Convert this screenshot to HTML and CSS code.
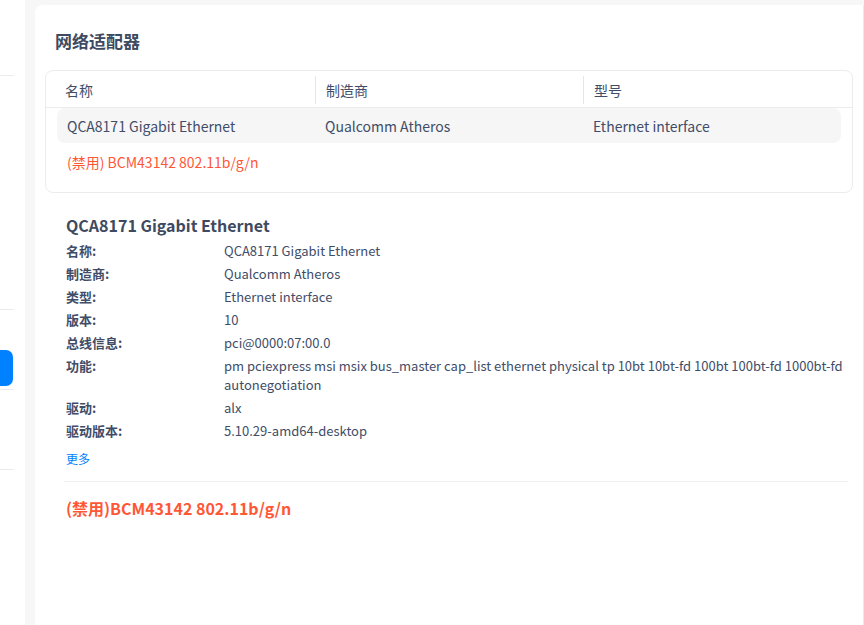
FILE: index.html
```html
<!DOCTYPE html>
<html lang="zh">
<head>
<meta charset="utf-8">
<title>网络适配器</title>
<link rel="stylesheet" href="styles.css">
</head>
<body>
<div class="app">
  <aside class="sidebar">
    <div class="sep sep-1"></div>
    <div class="sep sep-2"></div>
    <div class="nav-active"></div>
    <div class="sep sep-3"></div>
    <div class="sep sep-4"></div>
  </aside>
  <main class="card">
    <h1 class="page-title">网络适配器</h1>
    <div class="table-box">
      <div class="thead">
        <div class="th th-first">名称</div>
        <div class="th">制造商</div>
        <div class="th">型号</div>
      </div>
      <div class="trow">
        <div class="td">QCA8171 Gigabit Ethernet</div>
        <div class="td">Qualcomm Atheros</div>
        <div class="td">Ethernet interface</div>
      </div>
      <div class="trow-disabled">(禁用) BCM43142 802.11b/g/n</div>
    </div>
    <section class="details">
      <h2 class="detail-title">QCA8171 Gigabit Ethernet</h2>
      <dl class="props">
        <dt>名称:</dt><dd>QCA8171 Gigabit Ethernet</dd>
        <dt>制造商:</dt><dd>Qualcomm Atheros</dd>
        <dt>类型:</dt><dd>Ethernet interface</dd>
        <dt>版本:</dt><dd>10</dd>
        <dt>总线信息:</dt><dd>pci@0000:07:00.0</dd>
        <dt>功能:</dt><dd>pm pciexpress msi msix bus_master cap_list ethernet physical tp 10bt 10bt-fd 100bt 100bt-fd 1000bt-fd autonegotiation</dd>
        <dt>驱动:</dt><dd>alx</dd>
        <dt>驱动版本:</dt><dd>5.10.29-amd64-desktop</dd>
      </dl>
      <a class="more" href="#">更多</a>
      <div class="divider"></div>
      <h2 class="detail-title disabled">(禁用)BCM43142 802.11b/g/n</h2>
    </section>
  </main>
</div>
</body>
</html>
```
FILE: styles.css
```css
* { box-sizing: border-box; }
html, body {
  margin: 0;
  padding: 0;
  height: 100%;
  overflow: hidden;
}
body {
  background: #f7f7f7;
  font-family: "Noto Sans CJK SC", "Noto Sans", sans-serif;
  color: #414d68;
}
.app {
  display: flex;
  height: 625px;
}
.sidebar {
  width: 25px;
  flex: none;
  background: #ffffff;
  display: flex;
  flex-direction: column;
}
.sep {
  width: 14px;
  height: 1px;
  background: #ececec;
}
.sep-1 { margin-top: 75px; }
.sep-2 { margin-top: 233px; }
.nav-active {
  margin-top: 40px;
  width: 13px;
  height: 36px;
  background: #0081ff;
  border-radius: 0 7px 7px 0;
}
.sep-3 { margin-top: 3px; }
.sep-4 { margin-top: 79px; }

.card {
  margin: 5px 0 0 10px;
  width: 829px;
  height: 640px;
  background: #ffffff;
  border-radius: 8px 0 0 0;
  border-right: 1px solid #eaeaea;
  padding: 24px 10px 0 10px;
}
.page-title {
  margin: 0 0 17px 10px;
  font-size: 17px;
  line-height: 24px;
  font-weight: 700;
  color: #3e4a5f;
}
.table-box {
  border: 1px solid #ececec;
  border-radius: 8px;
  padding-bottom: 12px;
}
.thead {
  display: grid;
  grid-template-columns: 269px 268px 1fr;
  padding: 5px 0 3px;
  border-bottom: 1px solid #ececec;
}
.th {
  font-size: 14px;
  line-height: 28px;
  padding-left: 10px;
  border-left: 1px solid #e6e6e6;
}
.th-first {
  padding-left: 19px;
  border-left: none;
}
.trow {
  display: grid;
  grid-template-columns: 258px 268px 1fr;
  margin: 0 11px;
  background: #f6f6f6;
  border-radius: 8px;
}
.td {
  font-size: 14px;
  line-height: 34px;
  padding: 1px 0 0 10px;
  white-space: nowrap;
}
.trow-disabled {
  margin: 1px 11px 0;
  padding-left: 10px;
  font-size: 14px;
  line-height: 36px;
  color: #ff5736;
}
.details {
  padding: 20px 5px 0 21px;
}
.detail-title {
  margin: 0;
  font-size: 16px;
  line-height: 24px;
  font-weight: 700;
  color: #3e4a5f;
}
.detail-title.disabled {
  color: #ff5736;
}
.props {
  margin: 4px 0 0;
  display: grid;
  grid-template-columns: 158px 1fr;
  row-gap: 4px;
  font-size: 13px;
  line-height: 19px;
}
.props dt {
  font-weight: 700;
}
.props dd {
  margin: 0;
}
.more {
  display: block;
  margin-top: 10px;
  font-size: 12px;
  line-height: 17px;
  color: #0081ff;
  text-decoration: none;
}
.divider {
  margin: 14px 0 14px -2px;
  height: 1px;
  background: #eeeeee;
}
```
